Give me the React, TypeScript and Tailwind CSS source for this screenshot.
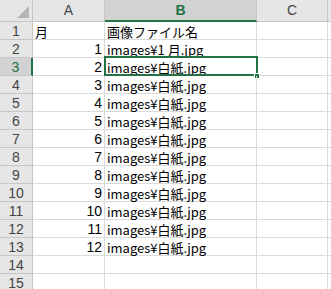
import React from "react";

const rows = [
  { a: "月", b: "画像ファイル名", num: false },
  { a: "1", b: "images¥1 月.jpg", num: true },
  { a: "2", b: "images¥白紙.jpg", num: true },
  { a: "3", b: "images¥白紙.jpg", num: true },
  { a: "4", b: "images¥白紙.jpg", num: true },
  { a: "5", b: "images¥白紙.jpg", num: true },
  { a: "6", b: "images¥白紙.jpg", num: true },
  { a: "7", b: "images¥白紙.jpg", num: true },
  { a: "8", b: "images¥白紙.jpg", num: true },
  { a: "9", b: "images¥白紙.jpg", num: true },
  { a: "10", b: "images¥白紙.jpg", num: true },
  { a: "11", b: "images¥白紙.jpg", num: true },
  { a: "12", b: "images¥白紙.jpg", num: true },
  { a: "", b: "", num: false },
  { a: "", b: "", num: false },
];

const font = { fontFamily: '"Noto Sans CJK JP", "Liberation Sans", sans-serif' };
const latin = { fontFamily: '"Liberation Sans", sans-serif' };

export default function App() {
  return (
    <div className="w-[331px] h-[289px] overflow-hidden bg-white text-black" style={font}>
      <div className="grid grid-cols-[33px_72px_152px_71px_20px] auto-rows-[18px] grid-rows-[22px]">
        {/* header row */}
        <div className="relative bg-[#e6e6e6] border-r border-b border-[#c6c6c6]">
          <div className="absolute right-[3px] bottom-[3px] w-0 h-0 border-l-[12px] border-l-transparent border-b-[12px] border-b-[#b5b5b5]" />
        </div>
        <div className="bg-[#e6e6e6] border-r border-b border-[#c6c6c6] flex items-center justify-center text-[14px] text-[#444]" style={latin}>A</div>
        <div className="bg-[#d2d2d2] border-r border-[#c6c6c6] border-b-2 border-b-[#217346] flex items-center justify-center text-[14px] font-bold text-[#217346]" style={latin}>B</div>
        <div className="bg-[#e6e6e6] border-r border-b border-[#c6c6c6] flex items-center justify-center text-[14px] text-[#444]" style={latin}>C</div>
        <div className="bg-[#e6e6e6] border-b border-[#c6c6c6]" />
        {rows.map((r, i) => {
          const sel = i === 2;
          return (
            <React.Fragment key={i}>
              <div
                className={
                  sel
                    ? "bg-[#d2d2d2] border-r-2 border-r-[#217346] border-b border-b-[#c6c6c6] flex items-center justify-center text-[14px] text-[#217346] leading-none"
                    : "bg-[#e6e6e6] border-r border-b border-[#c6c6c6] flex items-center justify-center text-[14px] text-[#444] leading-none"
                }
                style={latin}
              >
                {i + 1}
              </div>
              <div
                className={
                  r.num
                    ? "border-r border-b border-[#dadada] flex items-end justify-end pr-[2px] pb-[1px] text-[14px] leading-none whitespace-nowrap"
                    : "border-r border-b border-[#dadada] flex items-end pl-[2px] pb-[1px] text-[13px] leading-none whitespace-nowrap"
                }
                style={r.num ? latin : undefined}
              >
                {r.a}
              </div>
              <div className="relative border-r border-b border-[#dadada] flex items-end pl-[2px] pb-[1px] text-[13px] leading-none whitespace-nowrap">
                <span>{r.b}</span>
                {sel && (
                  <>
                    <div className="absolute left-[-1px] top-[-2px] right-[-2px] bottom-[-1px] border-2 border-[#217346]" />
                    <div className="absolute right-[-4px] bottom-[-4px] w-[6px] h-[6px] bg-[#217346] border border-white" />
                  </>
                )}
              </div>
              <div className="border-r border-b border-[#dadada]" />
              <div className="border-b border-[#dadada]" />
            </React.Fragment>
          );
        })}
      </div>
    </div>
  );
}
